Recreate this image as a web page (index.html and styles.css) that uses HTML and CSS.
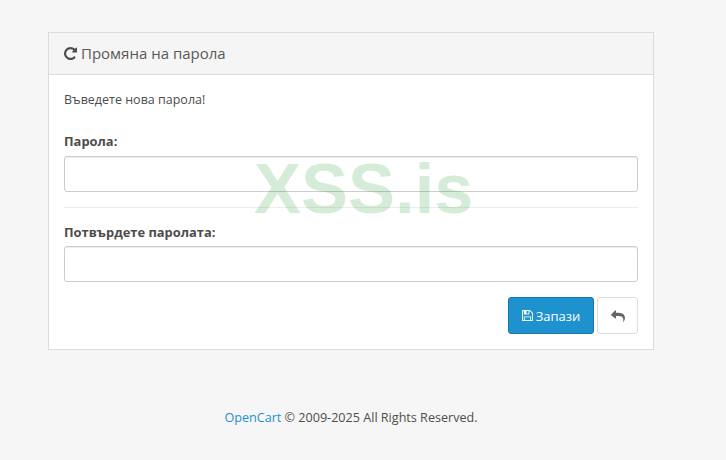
FILE: index.html
```html
<!DOCTYPE html>
<html lang="bg">
<head>
<meta charset="utf-8">
<title>Промяна на парола</title>
<link rel="stylesheet" href="styles.css">
</head>
<body>
<main class="page">
  <section class="panel">
    <h1 class="panel-heading">
      <svg class="icon-refresh" viewBox="0 0 1536 1536" aria-hidden="true"><path d="M1536 128v448q0 26-19 45t-45 19h-448q-42 0-59-40-17-39 14-69l138-138q-148-137-349-137-104 0-198.500 40.500t-163.500 109.500-109.500 163.500-40.500 198.500 40.500 198.500 109.500 163.500 163.500 109.500 198.500 40.500q119 0 225-52t179-147q7-10 23-12 14 0 25 9l137 138q9 8 9.500 20.500t-7.500 22.500q-109 132-264 204.500t-327 72.500q-156 0-298-61t-245-164-164-245-61-298 61-298 164-245 245-164 298-61q147 0 284.500 55.500t244.500 156.500l130-129q29-31 70-14 39 17 39 59z"/></svg>
      <span>Промяна на парола</span>
    </h1>
    <form class="panel-body">
      <p class="intro">Въведете нова парола!</p>
      <div class="field">
        <label class="field-label" for="pw">Парола:</label>
        <input class="field-input" id="pw" type="password">
      </div>
      <hr class="divider">
      <div class="field">
        <label class="field-label field-label-tight" for="pw2">Потвърдете паролата:</label>
        <input class="field-input" id="pw2" type="password">
      </div>
      <div class="actions">
        <button class="btn btn-primary" type="button">
          <svg class="icon-save" viewBox="0 0 1536 1792" aria-hidden="true"><path d="M384 1536h768v-384H384zm896 0h128V640q0-14-10-38.500T1378 568l-281-281q-10-10-34-20t-39-10v416q0 40-28 68t-68 28H352q-40 0-68-28t-28-68V256H128v1280h128v-416q0-40 28-68t68-28h832q40 0 68 28t28 68zM896 608V288q0-13-9.500-22.500T864 256H672q-13 0-22.500 9.500T640 288v320q0 13 9.500 22.500T672 640h192q13 0 22.500-9.500T896 608zm640 32v928q0 40-28 68t-68 28H96q-40 0-68-28t-28-68V224q0-40 28-68t68-28h928q40 0 88 20t76 48l280 280q28 28 48 76t20 88z"/></svg>
          <span>Запази</span>
        </button>
        <button class="btn btn-default" type="button" aria-label="Назад">
          <svg class="icon-reply" viewBox="0 0 1792 1792" aria-hidden="true"><path d="M1792 1120q0 166-127 451-3 7-10.500 24t-13.500 30-13 22q-12 17-28 17-15 0-23.500-10t-8.500-25q0-9 2.500-26.500t2.500-23.500q5-68 5-123 0-101-17.500-181t-48.500-138.500-80-101-105.500-69.500-133-42.500-154-21.500-175.500-6H640v256q0 26-19 45t-45 19-45-19L19 785Q0 766 0 740t19-45l512-512q19-19 45-19t45 19 19 45v256h224q713 0 875 403 53 134 53 333z"/></svg>
        </button>
      </div>
    </form>
  </section>
  <footer class="footer"><a class="footer-link" href="#">OpenCart</a> © 2009-2025 All Rights Reserved.</footer>
  <div class="watermark">XSS.is</div>
</main>
</body>
</html>
```
FILE: styles.css
```css
* { box-sizing: border-box; }
html, body { margin: 0; height: 100%; }
body {
  background: #f6f6f6;
  color: #4d4d4d;
  font-family: "Open Sans", sans-serif;
  font-size: 12px;
  line-height: 20px;
  overflow: hidden;
}
.page {
  position: relative;
  padding: 32px 0 0 48px;
  height: 460px;
}
.panel {
  width: 606px;
  background: #fff;
  border: 1px solid #dcdcdc;
  border-radius: 0;
}
.panel-heading {
  display: flex;
  align-items: center;
  gap: 4px;
  height: 42px;
  margin: 0;
  padding: 0 15px 1px;
  background: #f5f5f5;
  border-bottom: 1px solid #dcdcdc;
  font-size: 15px;
  font-weight: 400;
  color: #595959;
}
.icon-refresh { width: 13px; height: 13px; fill: #4d4d4d; flex: none; }
.panel-body { padding: 15px; }
.intro { margin: 0 0 21px; font-size: 12.5px; line-height: 20px; }
.field-label {
  display: block;
  margin-bottom: 5px;
  font-size: 12.9px;
  font-weight: 700;
  line-height: 20px;
  height: 20px;
}
.field-label-tight { margin-bottom: 4px; }
.field-input {
  display: block;
  width: 100%;
  height: 36px;
  padding: 8px 13px;
  background: #fff;
  border: 1px solid #ccc;
  border-radius: 3px;
  box-shadow: inset 0 1px 1px rgba(0,0,0,.075);
  font: inherit;
}
.divider {
  margin: 15px 0 14px;
  border: 0;
  border-top: 1px solid #ededed;
}
.actions {
  display: flex;
  justify-content: flex-end;
  gap: 3px;
  margin-top: 15px;
}
.btn {
  display: inline-flex;
  align-items: center;
  justify-content: center;
  height: 37px;
  border-radius: 3px;
  font: inherit;
  padding: 0;
}
.btn-primary {
  width: 86px;
  gap: 3px;
  background: #1e91cf;
  border: 1px solid #1978ab;
  color: #fff;
  font-size: 13px;
}
.btn-default {
  width: 41px;
  background: #fff;
  border: 1px solid #ddd;
}
.icon-save { width: 11px; height: 13px; fill: #fff; }
.icon-reply { width: 14px; height: 14px; fill: #666; }
.footer {
  margin-top: 58px;
  width: 606px;
  text-align: center;
  font-size: 12.6px;
  line-height: 20px;
}
.footer-link { color: #1e91cf; text-decoration: none; }
.watermark {
  position: absolute;
  left: 254px;
  top: 148px;
  font-family: "Liberation Sans", sans-serif;
  font-size: 70.5px;
  font-weight: 700;
  line-height: 82px;
  color: rgba(40, 160, 60, .2);
  pointer-events: none;
}
```
